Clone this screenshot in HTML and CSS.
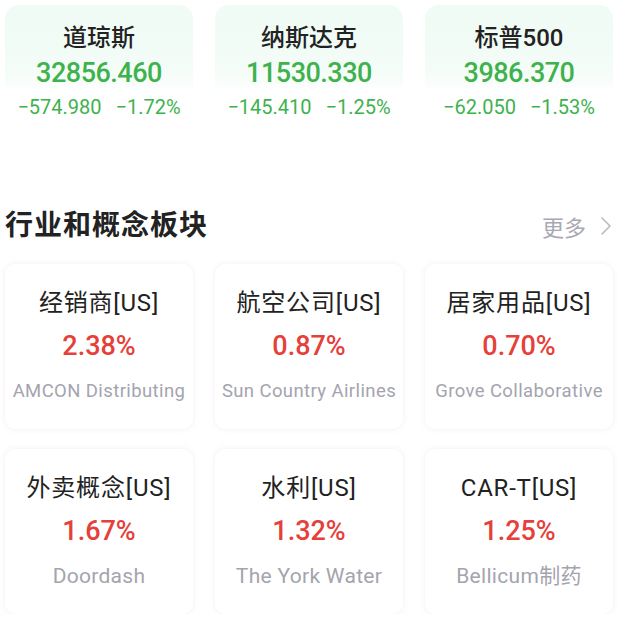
FILE: index.html
```html
<!DOCTYPE html>
<html lang="zh">
<head>
<meta charset="utf-8">
<link rel="stylesheet" href="styles.css">
</head>
<body>
<div class="indices">
  <div class="index-card">
    <div class="index-name">道琼斯</div>
    <div class="index-value">32856.460</div>
    <div class="index-change"><span>−574.980</span><span>−1.72%</span></div>
  </div>
  <div class="index-card">
    <div class="index-name">纳斯达克</div>
    <div class="index-value">11530.330</div>
    <div class="index-change"><span>−145.410</span><span>−1.25%</span></div>
  </div>
  <div class="index-card">
    <div class="index-name">标普500</div>
    <div class="index-value">3986.370</div>
    <div class="index-change"><span>−62.050</span><span>−1.53%</span></div>
  </div>
</div>

<div class="section-head">
  <div class="section-title">行业和概念板块</div>
  <div class="more">更多<svg class="chev" width="12" height="22" viewBox="0 0 12 22"><polyline points="2,3 10,11 2,19" fill="none" stroke="#b8b8c0" stroke-width="1.6" stroke-linecap="round" stroke-linejoin="round"/></svg></div>
</div>

<div class="sectors">
  <div class="sector-card">
    <div class="sector-name">经销商[US]</div>
    <div class="sector-pct">2.38%</div>
    <div class="sector-lead">AMCON Distributing</div>
  </div>
  <div class="sector-card">
    <div class="sector-name">航空公司[US]</div>
    <div class="sector-pct">0.87%</div>
    <div class="sector-lead">Sun Country Airlines</div>
  </div>
  <div class="sector-card">
    <div class="sector-name">居家用品[US]</div>
    <div class="sector-pct">0.70%</div>
    <div class="sector-lead">Grove Collaborative</div>
  </div>
  <div class="sector-card">
    <div class="sector-name">外卖概念[US]</div>
    <div class="sector-pct">1.67%</div>
    <div class="sector-lead lead-lg">Doordash</div>
  </div>
  <div class="sector-card">
    <div class="sector-name">水利[US]</div>
    <div class="sector-pct">1.32%</div>
    <div class="sector-lead lead-lg">The York Water</div>
  </div>
  <div class="sector-card">
    <div class="sector-name">CAR-T[US]</div>
    <div class="sector-pct">1.25%</div>
    <div class="sector-lead lead-lg">Bellicum制药</div>
  </div>
</div>
</body>
</html>
```

FILE: styles.css
```css
* { box-sizing: border-box; }
html, body { margin: 0; padding: 0; background: #ffffff; }
body {
  width: 620px;
  font-family: Roboto, "Noto Sans CJK SC", sans-serif;
  color: #222;
}

.indices {
  display: grid;
  grid-template-columns: repeat(3, 1fr);
  column-gap: 22px;
  padding: 5px 7px 0 5px;
}
.index-card {
  border-radius: 14px 14px 0 0;
  background: linear-gradient(180deg, #effbf4 0%, #f3fcf7 45%, #f8fdfa 58%, #ffffff 66%);
  padding: 18px 0 15px;
  text-align: center;
}
.index-name {
  font-size: 24px;
  line-height: 30px;
  color: #222;
  font-weight: 500;
}
.index-value {
  font-size: 27px;
  line-height: 40px;
  color: #3eb24d;
  font-weight: 500;
  letter-spacing: -0.5px;
}
.index-change {
  font-size: 20px;
  line-height: 28px;
  color: #3eb24d;
  display: flex;
  justify-content: center;
  gap: 14px;
}

.section-head {
  display: flex;
  align-items: center;
  justify-content: space-between;
  margin-top: 70px;
  padding: 0 8px 0 5px;
  height: 40px;
}
.section-title {
  font-size: 28px;
  font-weight: 700;
  color: #222;
  line-height: 40px;
  letter-spacing: 1px;
}
.more {
  display: flex;
  align-items: center;
  font-size: 22px;
  color: #a8a8b2;
  gap: 14px;
}
.chev { display: block; }

.sectors {
  display: grid;
  grid-template-columns: repeat(3, 1fr);
  column-gap: 22px;
  row-gap: 20px;
  padding: 18px 7px 0 5px;
}
.sector-card {
  height: 165px;
  border-radius: 10px;
  background: #fff;
  box-shadow: 0 0 5px rgba(240, 215, 228, 0.5);
  padding-top: 24px;
  text-align: center;
}
.sector-name {
  font-size: 24px;
  line-height: 30px;
  color: #222;
  letter-spacing: 0.8px;
}
.sector-pct {
  margin-top: 8px;
  font-size: 27px;
  line-height: 40px;
  color: #e5403a;
  font-weight: 500;
}
.sector-lead {
  margin-top: 12px;
  font-size: 18.5px;
  line-height: 26px;
  color: #a4a4ae;
  white-space: nowrap;
  letter-spacing: 0.4px;
}
.lead-lg {
  font-size: 21px;
  letter-spacing: 0.3px;
}
```
